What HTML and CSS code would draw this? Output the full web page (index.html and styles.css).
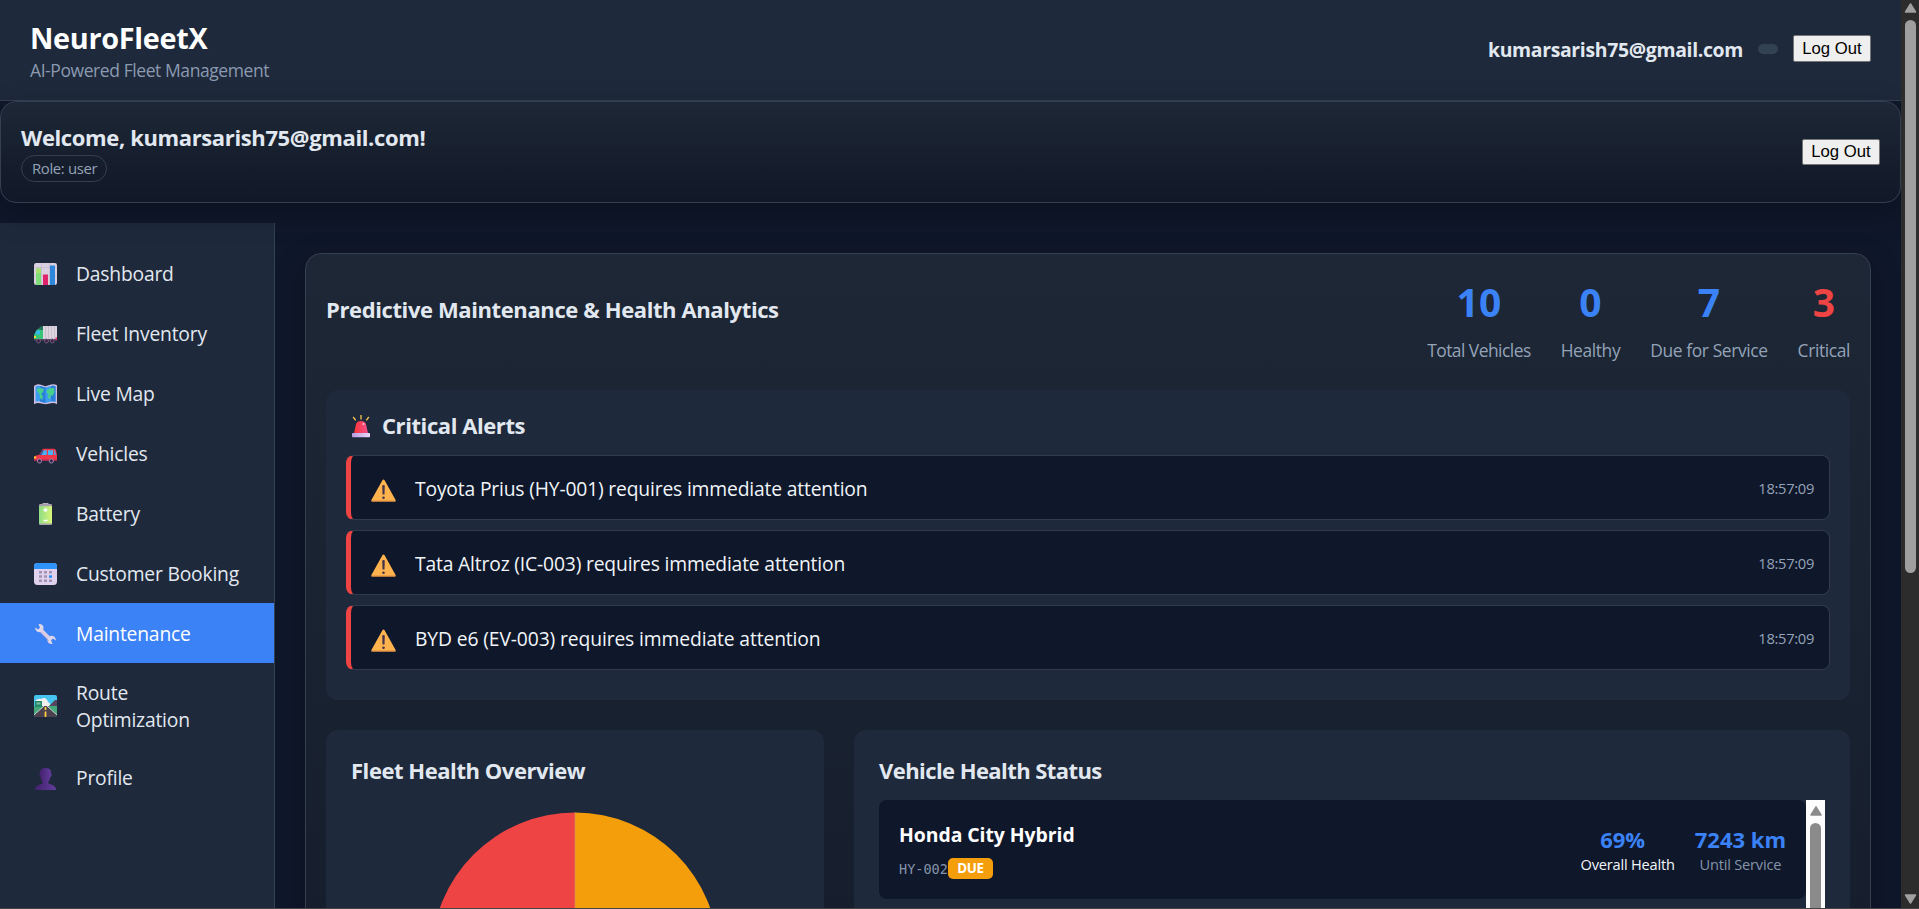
FILE: index.html
```html
<!DOCTYPE html>
<html lang="en">
<head>
<meta charset="utf-8">
<title>NeuroFleetX</title>
<link rel="stylesheet" href="styles.css">
</head>
<body>
<div class="window">
  <div class="page">
    <header class="topbar">
      <div class="brand">
        <h1 class="logo">NeuroFleetX</h1>
        <p class="tagline">AI-Powered Fleet Management</p>
      </div>
      <div class="account">
        <span class="email">kumarsarish75@gmail.com</span>
        <span class="role-dot"></span>
        <button class="logout">Log Out</button>
      </div>
    </header>

    <section class="welcome">
      <div>
        <h2 class="welcome-title">Welcome, kumarsarish75@gmail.com!</h2>
        <span class="role">Role: user</span>
      </div>
      <button class="logout short">Log Out</button>
    </section>

    <div class="body">
      <nav class="sidebar">
        <a class="nav-item"><svg class="nav-icon" viewBox="0 0 23 23"><rect width="23" height="22" rx="2.2" fill="#d9d0e0"/><path d="M7.5 0v22M15.5 0v22M0 4.5h23M0 13h23" stroke="#c2b6cc" stroke-width=".6"/><path d="M2 5.5h5V22H2z" fill="#7fdc79"/><path d="M2 5.5h5V10H2z" fill="#a4e06a"/><path d="M9 11.500h5V22H9z" fill="#e0246b"/><path d="M16 2.500h5V22h-5z" fill="#2f87dc"/></svg><span>Dashboard</span></a>
        <a class="nav-item"><svg class="nav-icon" viewBox="0 0 23 23"><path d="M9 3h14v14H9z" fill="#dcd5df"/><path d="M11.500 3v14M14.500 3v14M17.500 3v14M20.500 3v14" stroke="#c3b9c8" stroke-width=".8"/><path d="M0 17v-5l2-4q1-2 3-2h4v11z" fill="#36c478"/><path d="M4 6q2-3 5-3v4H6z" fill="#23785a"/><path d="M2.500 7.500h3.500v4H1.200z" fill="#35b6ee"/><path d="M0 13h2v2H0z" fill="#ffd43b"/><path d="M0 16h23v1.500H0z" fill="#5a4660"/><path d="M21.500 14.500H23V17h-1.500z" fill="#e8336d"/><g fill="#3b2448" stroke="#7d6788" stroke-width=".8"><circle cx="4.500" cy="18" r="2"/><circle cx="12.500" cy="18" r="2"/><circle cx="18.300" cy="18" r="2"/></g></svg><span>Fleet Inventory</span></a>
        <a class="nav-item"><svg class="nav-icon" viewBox="0 0 23 23"><path d="M0 3q3-2.500 6-1.500l5.500 1.800L17 1.500q3-1 6 .8v19q-3-2-6-1l-5.500 1-5.500-1q-3-1-6 1z" fill="#cdbfe0"/><path d="M1.500 3.500Q4 2.300 6 3l5.500 1.500L17 3q2.500-.8 4.500.300v15.500Q19 17.800 17 18.500L11.500 20 6 18.500q-2.200-.8-4.500.3z" fill="#3d9df0"/><path d="M6 3l5.500 1.500V20L6 18.500zM17 3q2.500-.8 4.500.3v15.500q-2.500-1-4.500-.3z" fill="#2b7fdb"/><path d="M3 6l3-1 4 1-1 3-2 2 2 2-1 4-2-2-.5-4L3 8zM13 7l3-2 4 0 .5 4-2 4-1.500-1-1 4-2-1 .5-4-2-1z" fill="#47cf8d"/></svg><span>Live Map</span></a>
        <a class="nav-item"><svg class="nav-icon" viewBox="0 0 23 23"><path d="M5 12l3-5q.7-1.300 2-1.300h10q1.500 0 2 1.500l1 5V17q0 1-1 1H1q-1 0-1-1v-2.500Q0 12.500 5 12z" fill="#f1364b"/><path d="M7 12l2.300-4q.5-.8 1.300-.8h2.200V12zM14 7.200h5V12h-5zM20.200 7.200h.6L22 12h-1.800z" fill="#45b2f5"/><path d="M5.500 12l3-5h1L7.500 12z" fill="#24549b"/><path d="M0 13.500h2.200v2H0z" fill="#ffcf3a"/><path d="M0 16.500h23V18H0z" fill="#a92a55"/><g fill="#3b2448" stroke="#a390b1" stroke-width=".9"><circle cx="5.500" cy="18" r="2.100"/><circle cx="17.300" cy="18" r="2.100"/></g></svg><span>Vehicles</span></a>
        <a class="nav-item"><svg class="nav-icon" viewBox="0 0 23 23"><defs><linearGradient id="cell"><stop stop-color="#8fdd86"/><stop offset="1" stop-color="#d9f57a"/></linearGradient></defs><path d="M8.500 0h6v1.500h-6z" fill="#b9b3bd"/><rect x="5" y="1" width="13" height="21" rx="1.200" fill="#a79fac"/><path d="M5 3.200h13v17.300H5z" fill="url(#cell)"/><path d="M11.500 5v4M9.500 7h4M9.500 17.500h4" stroke="#fff" stroke-width="1.500"/></svg><span>Battery</span></a>
        <a class="nav-item"><svg class="nav-icon" viewBox="0 0 23 23"><rect width="23" height="22" rx="3.500" fill="#e0d2ee"/><path d="M0 6V3.500Q0 0 3.500 0h16Q23 0 23 3.500V6z" fill="#2e93fb"/><g fill="#a294b1"><path d="M5 8h3v2.500H5zM10 8h3v2.500h-3zM15 8h3v2.500h-3zM5 12.300h3v2.500H5zM10 12.300h3v2.500h-3zM5 16.500h3V19H5zM10 16.500h3V19h-3zM15 16.500h3V19h-3z"/></g><path d="M15 12.300h3v2.500h-3z" fill="#2490f5"/></svg><span>Customer Booking</span></a>
        <a class="nav-item active"><svg class="nav-icon" viewBox="0 0 23 23"><path d="M6.500 6.500l10 10" stroke="#d9cde3" stroke-width="3.600"/><path d="M4.500 1.200q3-.8 4.500 1.500 1 1.700.3 3.500L6.500 9Q3.500 9.600 2 7.500 1 6 1.200 4.600L4 6.500l2-1.800zM18.500 20.800q-3 .8-4.500-1.500-1-1.700-.3-3.500l2.800-2.800q3-.6 4.500 1.500 1 1.500.8 2.900L19 15.500l-2 1.800z" fill="#dfd5e8"/><path d="M6 9l9 9" stroke="#b8a8c6" stroke-width=".7"/></svg><span>Maintenance</span></a>
        <a class="nav-item two-line"><svg class="nav-icon" viewBox="0 0 23 23"><defs><clipPath id="tile"><rect width="23" height="22" rx="2"/></clipPath></defs><g clip-path="url(#tile)"><path d="M0 0h23v12H0z" fill="#45c5ef"/><path d="M1 6q3-3 6-2 5-3 7 3 3 1 2 5H1z" fill="#f1f0ef"/><path d="M15 11l6-6h2v7h-8z" fill="#554761"/><path d="M0 11h23v11H0z" fill="#45a97b"/><path d="M1 6h7v6H1z" fill="#238a6a"/><path d="M2.500 7.500h4v2h-4z" fill="#85b9a2"/><path d="M10 11h3l10 9v2H0v-2z" fill="#4b404f"/><path d="M10 11L0 20M13 11l10 9" stroke="#ded9df" stroke-width=".9"/><path d="M11.500 12v3M11.500 16.500V22" stroke="#ffd23b" stroke-width="1.700"/></g></svg><span>Route Optimization</span></a>
        <a class="nav-item"><svg class="nav-icon" viewBox="0 0 23 23"><defs><linearGradient id="bust"><stop stop-color="#42216d"/><stop offset="1" stop-color="#623c9c"/></linearGradient></defs><path d="M6 4Q6 0 11.500 0T17 4v1q1.200 1 .4 3-.3.800-1 1-.4 3-2 4.500V18H8.500v-4.500Q7 12 6.600 9q-.9-.2-1.100-1.200Q5 6 6 5z" fill="url(#bust)"/><path d="M1 22q0-3.500 4-5.200 3-1.600 6.500-1.600T18 16.800q4 1.700 4 5.200z" fill="url(#bust)"/></svg><span>Profile</span></a>
      </nav>

      <main class="main">
        <section class="panel">
          <div class="panel-head">
            <h2 class="panel-title">Predictive Maintenance &amp; Health Analytics</h2>
            <div class="stats">
              <div class="stat"><b>10</b><span class="total">Total Vehicles</span></div>
              <div class="stat"><b>0</b><span>Healthy</span></div>
              <div class="stat"><b>7</b><span>Due for Service</span></div>
              <div class="stat critical"><b>3</b><span>Critical</span></div>
            </div>
          </div>

          <div class="alerts">
            <h3 class="alerts-title"><svg class="siren" viewBox="0 0 18 23"><defs><linearGradient id="lamp"><stop stop-color="#ff3434"/><stop offset="1" stop-color="#f0508f"/></linearGradient><linearGradient id="base"><stop stop-color="#b99ae0"/><stop offset="1" stop-color="#ead9fb"/></linearGradient></defs><path d="M9 0v4.500M1.200 2l2.500 3.300M16.800 2l-2.500 3.300" stroke="#f6c851" stroke-width="1.300"/><path d="M2 18.500L4 9q1-3 5-3t5 3l2 9.500z" fill="url(#lamp)"/><circle cx="11.500" cy="9" r="1.100" fill="#ffc0cb"/><rect y="18" width="18" height="4.300" rx=".8" fill="url(#base)"/></svg>Critical Alerts</h3>
            <div class="alert-list">
              <div class="alert"><svg class="warn" viewBox="0 0 25 23"><path d="M12.500.5q.7 0 1.100.8l11 19.700q.4 1.500-.8 1.500H1.200q-1.200 0-.8-1.500l11-19.700q.4-.8 1.100-.8z" fill="#ffb34e"/><path d="M.6 22h23.800" stroke="#e08a45"/><path d="M11.200 6.500q1.300-1.200 2.600 0l-.3 9h-2z" fill="#43344b"/><circle cx="12.500" cy="18.800" r="1.300" fill="#43344b"/></svg><span class="alert-text">Toyota Prius (HY-001) requires immediate attention</span><time>18:57:09</time></div>
              <div class="alert"><svg class="warn" viewBox="0 0 25 23"><path d="M12.500.5q.7 0 1.100.8l11 19.700q.4 1.500-.8 1.500H1.200q-1.200 0-.8-1.500l11-19.700q.4-.8 1.100-.8z" fill="#ffb34e"/><path d="M.6 22h23.800" stroke="#e08a45"/><path d="M11.200 6.500q1.300-1.200 2.600 0l-.3 9h-2z" fill="#43344b"/><circle cx="12.500" cy="18.800" r="1.300" fill="#43344b"/></svg><span class="alert-text">Tata Altroz (IC-003) requires immediate attention</span><time>18:57:09</time></div>
              <div class="alert"><svg class="warn" viewBox="0 0 25 23"><path d="M12.500.5q.7 0 1.100.8l11 19.700q.4 1.500-.8 1.500H1.200q-1.200 0-.8-1.500l11-19.700q.4-.8 1.100-.8z" fill="#ffb34e"/><path d="M.6 22h23.800" stroke="#e08a45"/><path d="M11.200 6.500q1.300-1.200 2.600 0l-.3 9h-2z" fill="#43344b"/><circle cx="12.500" cy="18.800" r="1.300" fill="#43344b"/></svg><span class="alert-text last">BYD e6 (EV-003) requires immediate attention</span><time>18:57:09</time></div>
            </div>
          </div>

          <div class="cards">
            <div class="card">
              <h3 class="card-title">Fleet Health Overview</h3>
              <svg class="pie" viewBox="0 0 288 288"><path d="M144 .5a143.500 143.500 0 0 1 0 287z" fill="#f59e0b"/><path d="M144 .5a143.500 143.500 0 0 0 0 287z" fill="#ef4444"/><path d="M144 .5v287" stroke="#d98a55" stroke-width=".8"/></svg>
            </div>
            <div class="card">
              <h3 class="card-title status">Vehicle Health Status</h3>
              <div class="vehicle-scroll">
                <div class="vehicle">
                  <div>
                    <h4 class="vehicle-name">Honda City Hybrid</h4>
                    <div class="vehicle-meta"><span class="vehicle-id">HY-002</span><span class="badge">DUE</span></div>
                  </div>
                  <div class="metrics">
                    <div class="metric health"><b>69%</b><span>Overall Health</span></div>
                    <div class="metric"><b>7243 km</b><span>Until Service</span></div>
                  </div>
                </div>
                <div class="inner-bar"><svg width="12" height="10" viewBox="0 0 12 10"><path d="M6 1l5 8H1z" fill="#8b8b8b" stroke="#8b8b8b" stroke-width="1.500" stroke-linejoin="round"/></svg><i></i></div>
              </div>
            </div>
          </div>
        </section>
      </main>
    </div>
  </div>
  <div class="scrollbar">
    <svg width="13" height="10" viewBox="0 0 13 10"><path d="M6.500 1l5 8h-10z" fill="#a0a0a0" stroke="#a0a0a0" stroke-width="1.500" stroke-linejoin="round"/></svg>
    <i></i>
    <svg class="down" width="13" height="10" viewBox="0 0 13 10"><path d="M6.500 9l5-8h-10z" fill="#a0a0a0" stroke="#a0a0a0" stroke-width="1.500" stroke-linejoin="round"/></svg>
  </div>
</div>
</body>
</html>
```
FILE: styles.css
```css
* { box-sizing: border-box; }
html, body { height: 100%; }
body {
  margin: 0;
  overflow: hidden;
  background: #0f172a;
  color: #e2e8f0;
  font-family: "Open Sans", "Noto Sans", sans-serif;
}
h1, h2, h3, h4, p { margin: 0; }

.window { display: flex; height: 909px; border-bottom: 1px solid #444; }
.page { flex: 1; min-width: 0; overflow: hidden; }

/* Header */
.topbar {
  display: flex;
  justify-content: space-between;
  height: 101px;
  padding: 20px 30px 0;
  background: #1e293b;
  border-bottom: 1px solid #334155;
}
.logo { font-size: 28.8px; line-height: 36px; letter-spacing: -.3px; color: #fff; }
.tagline { font-size: 17.5px; line-height: 28px; letter-spacing: -.42px; color: #8b9ab0; }
.account { display: flex; align-items: center; height: 57px; gap: 15px; }
.email { padding-top: 2px; font-size: 19.4px; font-weight: 700; letter-spacing: -.32px; }
.role-dot { width: 20px; height: 10px; border-radius: 5px; background: #334155; }
.logout {
  width: 78px;
  height: 27px;
  padding: 0;
  font: 16.7px "Liberation Sans", sans-serif;
  color: #000;
  background: #efefef;
  border: 1px solid #767676;
  border-radius: 2px;
}
.logout.short { height: 26px; padding-bottom: 1px; }

/* Greeting card */
.welcome {
  display: flex;
  justify-content: space-between;
  align-items: center;
  position: relative;
  height: 102px;
  padding: 20px;
  border: 1px solid #343f50;
  border-radius: 16px;
  background: linear-gradient(180deg, #1d2735, #111827);
  box-shadow: 0 10px 30px rgba(0, 0, 0, .25);
}
.welcome-title { font-size: 22px; line-height: 30px; letter-spacing: -.37px; margin-bottom: 3px; }
.role {
  display: block;
  width: 86px;
  height: 27px;
  padding: 0 10px;
  border: 1px solid #343f50;
  border-radius: 14px;
  font-size: 14.9px;
  line-height: 25px;
  letter-spacing: -.35px;
  color: #94a3b8;
  white-space: nowrap;
}

/* Sidebar */
.body { display: flex; margin-top: 20px; height: 1200px; }
.sidebar {
  width: 275px;
  padding-top: 20px;
  background: #1e293b;
  border-right: 1px solid #334155;
}
.nav-item {
  display: flex;
  align-items: center;
  gap: 19px;
  height: 60px;
  padding-left: 34px;
  padding-right: 60px;
  font-size: 19.3px;
  line-height: 27px;
  letter-spacing: -.2px;
}
.nav-item span { flex: 1; white-space: nowrap; }
.nav-item.two-line { height: 84.500px; }
.nav-item.two-line span { white-space: normal; padding-top: 2px; }
.nav-item.active { background: #3b82f6; color: #fff; }
.nav-icon { width: 23px; height: 23px; margin-top: 3px; flex: none; }

/* Main panel */
.main { flex: 1; min-width: 0; padding: 30px; }
.panel {
  height: 1150px;
  padding: 20px;
  border: 1px solid #343f50;
  border-radius: 16px;
  background: linear-gradient(180deg, #1d2735, #111827);
  box-shadow: 0 10px 30px rgba(0, 0, 0, .25);
}
.panel-head { display: flex; justify-content: space-between; height: 116px; }
.panel-title { font-size: 22px; line-height: 71px; letter-spacing: -.39px; }
.stats { display: flex; gap: 30px; }
.stat { text-align: center; }
.stat b { display: block; font-size: 39px; line-height: 56px; color: #3b82f6; }
.stat span { display: block; margin-top: 6px; font-size: 17.4px; line-height: 28px; letter-spacing: -.38px; color: #94a3b8; }
.stat .total { letter-spacing: -.52px; }
.stat.critical b { color: #ef4444; }

/* Alerts */
.alerts { height: 310px; padding: 20px 20px 30px; border-radius: 12px; background: #1e293b; }
.alerts-title { display: flex; gap: 12px; padding-left: 6px; margin-bottom: 14px; font-size: 22px; line-height: 31px; letter-spacing: -.42px; }
.siren { width: 18px; height: 23px; margin-top: 5px; }
.alert-list { display: flex; flex-direction: column; gap: 10px; }
.alert {
  display: flex;
  align-items: center;
  gap: 19px;
  height: 65px;
  padding: 0 15px 0 20px;
  border: 1px solid #303b4e;
  border-left: 5px solid #ef4444;
  border-radius: 8px;
  background: #0f172a;
}
.warn { width: 25px; height: 23px; margin-top: 6px; }
.alert-text { flex: 1; font-size: 19.3px; letter-spacing: -.17px; padding-top: 1px; color: #f1f5f9; }
.alert-text.last { letter-spacing: -.12px; }
.alert time { font-size: 14.7px; letter-spacing: -.3px; color: #94a3b8; }

/* Cards */
.cards { display: grid; grid-template-columns: 1fr 2fr; gap: 30px; margin-top: 30px; }
.card { height: 480px; padding: 25px; border-radius: 12px; background: #1e293b; }
.card-title { margin-bottom: 14px; font-size: 22px; line-height: 31px; letter-spacing: -.45px; }
.card-title.status { letter-spacing: -.57px; }
.pie { display: block; width: 288px; height: 288px; margin: 26px auto 0; }
.vehicle-scroll { display: flex; }
.vehicle {
  flex: 1;
  display: flex;
  justify-content: space-between;
  height: 99px;
  padding: 20px;
  border-radius: 8px;
  background: #0f172a;
}
.vehicle-name { font-size: 19.4px; line-height: 30px; letter-spacing: -.05px; color: #fff; }
.vehicle-meta { display: flex; align-items: center; margin-top: 8px; height: 21px; }
.vehicle-id { width: 49px; white-space: nowrap; font: 13.500px "DejaVu Sans Mono", "Liberation Mono", monospace; color: #8494aa; }
.badge { width: 45px; height: 21px; border-radius: 5px; background: #f59e0b; color: #fff; font-size: 13.400px; font-weight: 700; line-height: 21px; letter-spacing: -.4px; text-align: center; }
.metrics { display: flex; gap: 20px; padding-top: 5px; }
.metric { text-align: center; color: #8494aa; }
.metric b { display: block; font-size: 22px; line-height: 28px; color: #3b82f6; }
.metric span { display: block; font-size: 14.600px; line-height: 22px; letter-spacing: -.2px; }
.metric.health { color: #f1f5f9; }
.metric.health b { padding-right: 10px; }
.inner-bar { width: 19px; height: 400px; padding-top: 6px; background: #fdfdfd; display: flex; flex-direction: column; align-items: center; gap: 7px; }
.inner-bar i { width: 11px; flex: 1; border-radius: 6px; background: #8b8b8b; }

/* Window scrollbar */
.scrollbar { display: flex; flex-direction: column; align-items: center; width: 18px; padding: 3px 0 4px; background: #2c2c2c; }
.scrollbar i { width: 11px; height: 553px; margin-top: 7px; border-radius: 6px; background: #9f9f9f; }
.scrollbar .down { margin-top: auto; }
```
